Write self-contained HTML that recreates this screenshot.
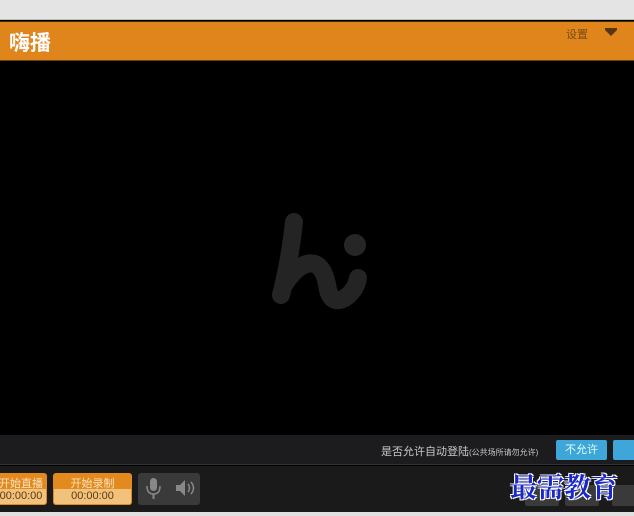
<!DOCTYPE html><html><head><meta charset="utf-8"><style>
body{margin:0;width:634px;height:516px;overflow:hidden;background:#000;font-family:"Liberation Sans","Noto Sans CJK SC",sans-serif;position:relative}
div{position:absolute;box-sizing:border-box}
.ob{background:#e38a1f;border-radius:3px;color:#fbe3c0;font-size:11px;text-align:center}
.ob .t{position:absolute;left:0;right:0;top:2px}
.ob .b{position:absolute;left:1px;right:1px;bottom:1px;height:15px;background:#f2c27c;color:#5a3a10;line-height:15px;border-radius:0 0 2px 2px}
</style></head><body>
<div style="left:0;top:0;width:634px;height:20px;background:#e4e4e4;border-bottom:1px solid #bbb"></div>
<div style="left:0;top:21px;width:634px;height:40px;background:#df851c;border-top:1px solid #3a2a10;border-bottom:1px solid #6a4010"></div>
<div style="left:9px;top:27px;color:#fff;font-size:21px;font-weight:bold">嗨播</div>
<div style="left:566px;top:26px;color:#7a4a10;font-size:11px">设置</div>
<div style="left:605px;top:30px;width:0;height:0;border-left:6px solid transparent;border-right:6px solid transparent;border-top:6px solid #5a3610"></div>
<div style="left:605px;top:28px;width:12px;height:2px;background:#5a3610"></div>
<svg style="position:absolute;left:0;top:0" width="634" height="516">
<g fill="none" stroke="#242424" stroke-width="18" stroke-linecap="round">
<path d="M294 222 Q290 260 281 295"/>
<path d="M284 285 Q300 260 315 264 Q325 268 328 290 Q332 305 345 298 Q356 290 358 278"/>
</g>
<circle cx="355" cy="245" r="11" fill="#262626"/>
</svg>
<div style="left:0;top:435px;width:634px;height:30px;background:#1c1c1e;border-bottom:1px solid #333"></div>
<div style="left:381px;top:443px;color:#c8c8c8;font-size:11px">是否允许自动登陆<span style="font-size:8px">(公共场所请勿允许)</span></div>
<div style="left:556px;top:440px;width:51px;height:20px;background:#3ea6d8;color:#dff;font-size:11px;text-align:center;line-height:20px;border-radius:2px">不允许</div>
<div style="left:613px;top:440px;width:30px;height:20px;background:#3ea6d8;border-radius:2px"></div>
<div style="left:0;top:466px;width:634px;height:46px;background:#1a1a1a"></div>
<div class="ob" style="left:-5px;top:473px;width:52px;height:32px"><span class="t">开始直播</span><span class="b">00:00:00</span></div>
<div class="ob" style="left:53px;top:473px;width:79px;height:32px"><span class="t">开始录制</span><span class="b">00:00:00</span></div>
<div style="left:138px;top:473px;width:62px;height:32px;background:#3a3a3a;border-radius:3px"></div>
<svg style="position:absolute;left:0;top:0" width="634" height="516">
<g fill="#888">
<rect x="150" y="478" width="7" height="13" rx="3.5"/>
<path d="M147 486 q0 8 6.5 8 q6.5 0 6.5 -8" fill="none" stroke="#888" stroke-width="1.5"/>
<rect x="152.5" y="494" width="2" height="5"/>
<path d="M176 485 h4 l5 -5 v16 l-5 -5 h-4z"/>
<path d="M188 484 q3 4 0 8 M191 482 q5 6 0 12" fill="none" stroke="#888" stroke-width="1.5"/>
</g>
</svg>
<div style="left:525px;top:485px;width:34px;height:21px;background:#3a3a3a;border-radius:2px"></div>
<div style="left:565px;top:485px;width:34px;height:21px;background:#3a3a3a;border-radius:2px"></div>
<div style="left:612px;top:485px;width:30px;height:21px;background:#3a3a3a;border-radius:2px"></div>
<div style="left:510px;top:466px;color:#1a28c8;font-size:27px;font-weight:bold;font-family:'Noto Serif CJK SC',serif;text-shadow:1px 1px 0 #fff,-1px -1px 0 #fff,1px -1px 0 #fff,-1px 1px 0 #fff">最需教育</div>
<div style="left:0;top:512px;width:634px;height:4px;background:#e0e0e0"></div>
</body></html>
